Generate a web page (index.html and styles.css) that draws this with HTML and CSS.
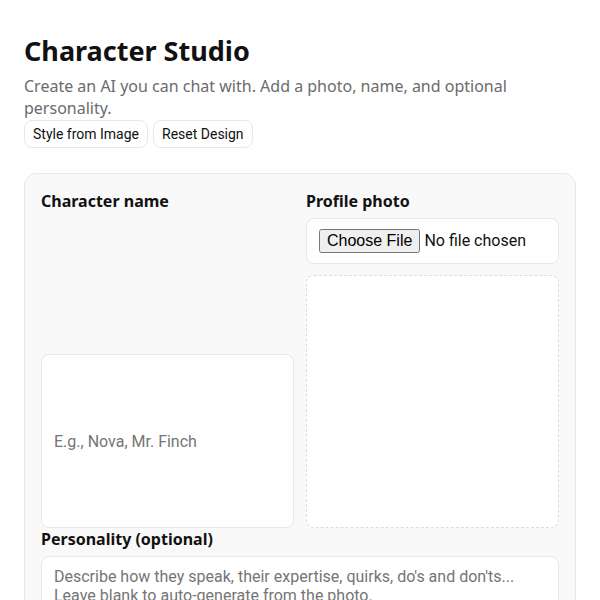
FILE: index.html
```html
<!DOCTYPE html>
<html lang="en">
<head>
<meta charset="UTF-8" />
<meta name="viewport" content="width=device-width, initial-scale=1.0" />
<title>Character Studio</title>
<link rel="stylesheet" href="styles.css">
</head>
<body>
  <div class="page">
    <h1>Character Studio</h1>
    <p class="lead">Create an AI you can chat with. Add a photo, name, and optional personality.</p>

    <!-- Design tools -->
    <div class="toolbar">
      <button type="button" class="btn-tool">Style from Image</button>
      <button type="button" class="btn-tool">Reset Design</button>
    </div>

    <!-- Character form -->
    <form class="card">
      <div class="form-grid">
        <div class="field field-name">
          <label for="char-name">Character name</label>
          <input type="text" id="char-name" name="char-name" placeholder="E.g., Nova, Mr. Finch" />
        </div>
        <div class="field">
          <label for="char-photo">Profile photo</label>
          <input type="file" id="char-photo" name="char-photo" accept="image/*" />
          <div class="photo-preview"></div>
        </div>
      </div>

      <label for="char-personality">Personality (optional)</label>
      <textarea id="char-personality" name="char-personality" placeholder="Describe how they speak, their expertise, quirks, do's and don'ts...&#10;Leave blank to auto-generate from the photo."></textarea>
    </form>
  </div><!-- /.page -->
</body>
</html>
```

FILE: styles.css
```css
:root {
  --clr-text: #111;
  --clr-muted: #6b6b6b;
  --clr-card: #f9f9f9;
  --clr-border: #e8e8e8;
  --clr-dash: #dcdcdc;
  --radius: 8px;
}

* {
  box-sizing: border-box;
}

body {
  margin: 0;
  background: #fff;
  color: var(--clr-text);
  font-family: "Noto Sans", Arial, sans-serif;
}

.page {
  padding: 35px 24px 24px;
}

h1 {
  margin: 0;
  font-size: 27px;
  line-height: 1.2;
  font-weight: 700;
}

.lead {
  margin: 8px 0 0;
  font-size: 16px;
  color: var(--clr-muted);
}

/* --- Toolbar --- */
.toolbar {
  display: flex;
  gap: 5px;
  margin-top: 1px;
}
.btn-tool {
  padding: 5px 8px;
  font-family: Roboto, Arial, sans-serif;
  font-size: 14px;
  font-weight: 400;
  line-height: 16px;
  color: var(--clr-text);
  background: #fff;
  border: 1px solid var(--clr-border);
  border-radius: var(--radius);
  cursor: pointer;
}

/* --- Card --- */
.card {
  margin-top: 25px;
  padding: 16px;
  background: var(--clr-card);
  border: 1px solid var(--clr-border);
  border-radius: 12px;
}

.form-grid {
  display: grid;
  grid-template-columns: 1fr 1fr;
  gap: 12px;
}

.field {
  display: flex;
  flex-direction: column;
}

label {
  display: block;
  margin-bottom: 6px;
  font-size: 16px;
  font-weight: 700;
}

input[type="text"],
input[type="file"],
textarea {
  width: 100%;
  padding: 10px 12px;
  font-family: Roboto, Arial, sans-serif;
  font-size: 16px;
  color: var(--clr-text);
  background: #fff;
  border: 1px solid var(--clr-border);
  border-radius: var(--radius);
}

.field-name input {
  margin-top: auto;
  height: 174px;
}

.photo-preview {
  margin-top: 11px;
  aspect-ratio: 1 / 1;
  background: #fff;
  border: 1px dashed var(--clr-dash);
  border-radius: var(--radius);
}

textarea {
  display: block;
  min-height: 90px;
  resize: vertical;
}
::placeholder {
  color: #757575;
}
```
